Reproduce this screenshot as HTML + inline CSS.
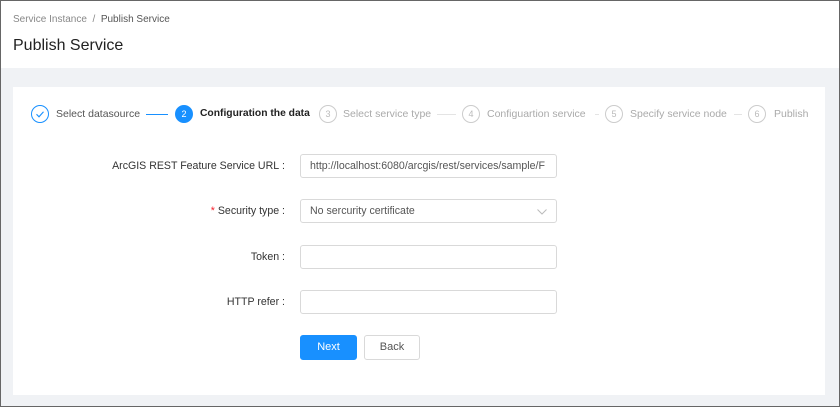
<!DOCTYPE html>
<html><head><style>
*{box-sizing:border-box;margin:0;padding:0}
body{width:840px;height:407px;overflow:hidden;font-family:"Liberation Sans",sans-serif;background:#f0f2f5;position:relative}
.frame{position:absolute;left:0;top:0;width:840px;height:407px;border:1px solid #666;pointer-events:none;z-index:9}
.hdr{position:absolute;left:0;top:0;width:840px;height:68px;background:#fff}
.bc{position:absolute;left:13px;top:14px;font-size:10px;color:#888}
.bc b{font-weight:normal;color:#555}
.title{position:absolute;left:13px;top:37px;font-size:16px;color:#222}
.card{position:absolute;left:13px;top:87px;width:812px;height:308px;background:#fff}
.c{position:absolute;top:105px;width:18px;height:18px;border-radius:50%;border:1px solid #ccc;color:#bbb;font-size:9px;text-align:center;line-height:16px}
.t{position:absolute;top:108px;font-size:10.5px;color:#aaa;white-space:nowrap}
.l{position:absolute;top:114px;height:1px;background:#e4e4e4}
.lab{position:absolute;right:555px;font-size:10.6px;color:#333;text-align:right;white-space:nowrap}
.inp{position:absolute;left:300px;width:257px;height:24px;border:1px solid #d9d9d9;border-radius:3px;font-size:10.6px;color:#555;padding:5px 9px;white-space:nowrap;overflow:hidden}
.btn{position:absolute;top:335px;height:25px;border-radius:3px;font-size:11px;text-align:center;line-height:23px}
</style></head><body>
<div class="hdr">
<div class="bc">Service Instance&nbsp;&nbsp;/&nbsp;&nbsp;<b>Publish Service</b></div>
<div class="title">Publish Service</div>
</div>
<div class="card"></div>
<div class="c" style="left:31px;border-color:#1890ff"><svg width="16" height="16" viewBox="0 0 16 16" style="position:absolute;left:0;top:0"><path d="M4.5 8.2l2.5 2.6 4.5-5" fill="none" stroke="#1890ff" stroke-width="1.1"/></svg></div>
<div class="t" style="left:56px;color:#555">Select datasource</div>
<div class="l" style="left:146px;width:22px;background:#1890ff"></div>
<div class="c" style="left:175px;background:#1890ff;border-color:#1890ff;color:#fff">2</div>
<div class="t" style="left:200px;color:#222;font-weight:bold;font-size:10.3px">Configuration the data</div>
<div class="c" style="left:319px">3</div>
<div class="t" style="left:343px">Select service type</div>
<div class="l" style="left:437px;width:19px"></div>
<div class="c" style="left:462px">4</div>
<div class="t" style="left:487px">Configuartion service</div>
<div class="l" style="left:595px;width:4px"></div>
<div class="c" style="left:605px">5</div>
<div class="t" style="left:630px">Specify service node</div>
<div class="l" style="left:734px;width:8px"></div>
<div class="c" style="left:748px">6</div>
<div class="t" style="left:774px">Publish</div>

<div class="lab" style="top:160px">ArcGIS REST Feature Service URL&nbsp;:</div>
<div class="inp" style="top:154px">http://localhost:6080/arcgis/rest/services/sample/F</div>
<div class="lab" style="top:205px"><span style="color:#f5222d">*</span> Security type&nbsp;:</div>
<div class="inp" style="top:199px">No sercurity certificate<svg width="10" height="6" viewBox="0 0 10 6" style="position:absolute;right:9px;top:9px"><path d="M0.5 0.5l4.5 4.5 4.5-4.5" fill="none" stroke="#bbb" stroke-width="1"/></svg></div>
<div class="lab" style="top:251px">Token&nbsp;:</div>
<div class="inp" style="top:245px"></div>
<div class="lab" style="top:296px">HTTP refer&nbsp;:</div>
<div class="inp" style="top:290px"></div>
<div class="btn" style="left:300px;width:57px;background:#1890ff;color:#fff;border:1px solid #1890ff">Next</div>
<div class="btn" style="left:364px;width:56px;background:#fff;color:#555;border:1px solid #d9d9d9">Back</div>
<div class="frame"></div>
</body></html>
